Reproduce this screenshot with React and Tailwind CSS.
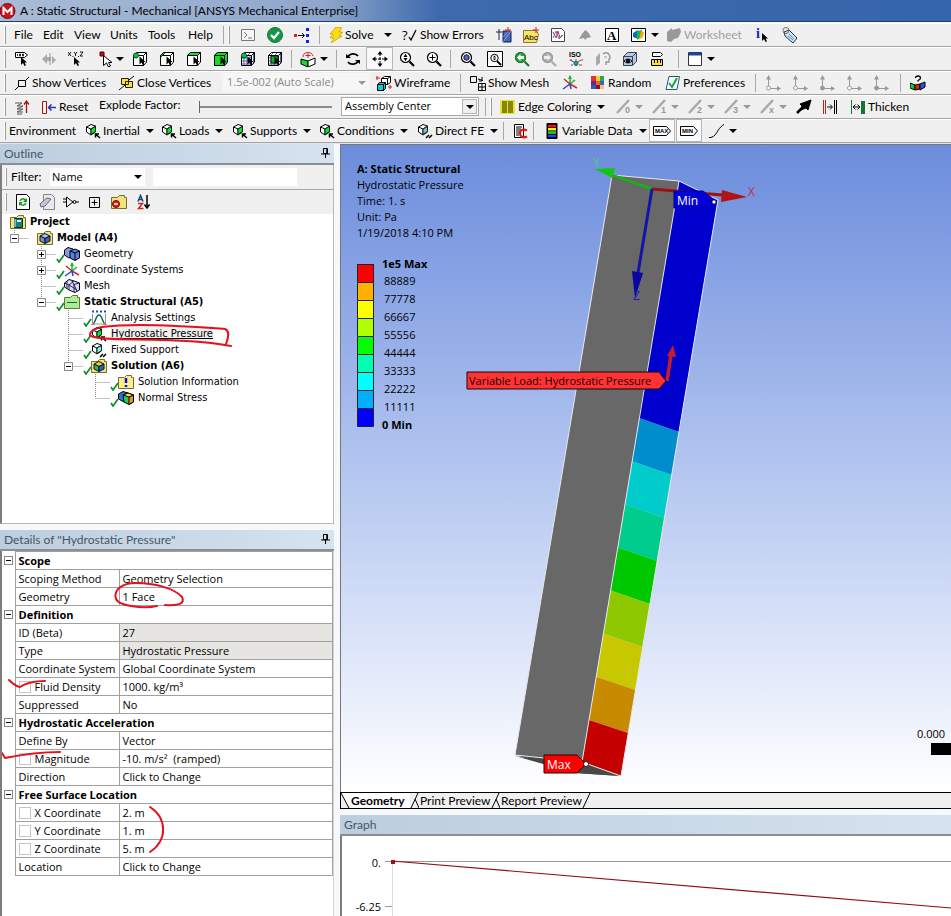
import { Fragment } from 'react';

const LEGEND = [
  ['1e5 Max', '#ff0000'],
  ['88889', '#ffb000'],
  ['77778', '#ffff00'],
  ['66667', '#b0ff00'],
  ['55556', '#00ff00'],
  ['44444', '#00ffb0'],
  ['33333', '#00ffff'],
  ['22222', '#00b0ff'],
  ['11111', '#0000ff'],
  ['0 Min', null],
];

const BAND_COLORS = ['#008dcc', '#00cccc', '#00cc8d', '#00c800', '#8dc800', '#c8c800', '#c88a00', '#c40000'];

// Small building blocks

function Icon({ w = 16, h = 16, className = '', children }) {
  return (
    <svg width={w} height={h} viewBox={`0 0 ${w} ${h}`} className={`flex-none ${className}`} fill="none" stroke="#000" aria-hidden="true">
      {children}
    </svg>
  );
}

function Caret({ color = '#000', className = '' }) {
  return (
    <svg width="8" height="4" viewBox="0 0 8 4" className={`flex-none ${className}`} aria-hidden="true">
      <path d="M0 0h8L4 4z" fill={color} />
    </svg>
  );
}

function Toolbar({ children }) {
  return (
    <div className="flex h-6 items-center overflow-hidden border-b border-[#a5a5a5] bg-[#f0f0f0] pl-1 shadow-[inset_0_1px_0_#fff]">
      {children}
    </div>
  );
}

function Grip({ className = '' }) {
  return <span className={`h-[18px] w-[2px] flex-none border-r border-[#9a9a9a] bg-white ${className}`} />;
}

function Sep({ className = '' }) {
  return <span className={`h-[18px] w-px flex-none bg-[#a8a8a8] ${className}`} />;
}

function Tool({ label, className = '', children }) {
  return (
    <button type="button" aria-label={label} className={`flex h-[23px] flex-none items-center whitespace-nowrap text-left ${className}`}>
      {children}
    </button>
  );
}

function IconTool({ label, children }) {
  return (
    <Tool label={label} className="w-[27px] justify-center">
      {children}
    </Tool>
  );
}

// Shared drawings

const Cursor = ({ x = 7, y = 6, fill = '#000', stroke = 'none' }) => (
  <path transform={`translate(${x} ${y})`} d="M0 0v8l2-2 1.500 3 1.500-.7L3.600 5.600H6z" fill={fill} stroke={stroke} strokeWidth=".8" />
);

function CubeSelect({ kind }) {
  const mesh = kind === 'node' || kind === 'element';
  return (
    <Icon>
      <path d="M1 4l3-3h11v10l-3 4H1z" fill="#fff" stroke="none" />
      {kind === 'face' && <path d="M1 4l3-3h11l-3 3z" fill="#0e2" stroke="none" />}
      {kind === 'body' && <path d="M1 4l3-3h11v10l-3 4H1z" fill="#1d2" stroke="none" />}
      {mesh && <path d="M4 4v11M7 4v11M10 4v11M1 7h11M1 10h11M1 13h11M4 4l3-3M8 4l3-3M13.500 3v10" stroke="#3a3a99" strokeWidth=".8" />}
      {kind === 'element' && <path d="M4 5h7v7H4z" fill="#1a3" stroke="#020" />}
      <path d="M1.500 4.500h10v10h-10zM1.500 4.500l3-3h10v9.500l-3 3.500M11.500 4.500l3-3" />
      {kind === 'edge' && <path d="M1.500 4.500l3-3 1 1-3 3z" fill="#1d2" />}
      {(kind === 'vertex' || kind === 'node') && <circle cx="4" cy="4.500" r="2.500" fill="#1b5" stroke="#052" />}
      <Cursor x={7.5} y={5.5} />
    </Icon>
  );
}

function LoadIcon({ face = '#1d4', lines = false }) {
  return (
    <Icon>
      <path d="M1.500 4L6 1.500 10.500 3v6L6 12 1.500 9z" fill="#fff" />
      <path d="M1.500 4L6 6l4.500-3M6 6v6" />
      <path d="M6 6l4.500-2.500v5L6 11.500z" fill={face} stroke="#030" />
      {lines ? <path d="M9 15l3-3M12 15l3-3" strokeWidth="1.500" /> : <path d="M15 15l-4-3.500M10.500 14.500v-3.500h3.500" strokeWidth="1.500" />}
    </Icon>
  );
}

function Magnifier({ color = '#000', children }) {
  return (
    <Icon>
      <circle cx="6.500" cy="6.500" r="5" fill="#fff" stroke={color} strokeWidth="1.200" />
      <path d="M10.500 10.500L15 15" stroke={color} strokeWidth="2.200" />
      {children}
    </Icon>
  );
}

function TriadIcon() {
  return (
    <Icon>
      <path d="M8 9V1M8 9l5-4" stroke="#1b3" strokeWidth="1.500" />
      <path d="M8 9l7 4M2 4l6 5" stroke="#d22" strokeWidth="1.500" />
      <path d="M8 9l-7 5M8 9l1 5" stroke="#24d" strokeWidth="1.500" />
      <path d="M8 0L6 4h4z" fill="#1b3" stroke="none" />
    </Icon>
  );
}

function GrayAxes({ hollow }) {
  return (
    <Icon className="mr-[11px]">
      <path d="M3.500 2v11.500H14" stroke="#999" />
      <path d="M1 4.500L3.500 0 6 4.500zM12 11l4 2.500-4 2.500z" fill="#999" stroke="none" />
      <circle cx="3.500" cy="13" r="2" fill={hollow ? '#fff' : '#999'} stroke="#999" />
    </Icon>
  );
}

function GrayEdge({ label }) {
  return (
    <Tool label={`Edge style ${label}`} className="w-9 gap-[3px]">
      <Icon>
        <path d="M1 14L13 1" stroke="#aaa" strokeWidth="2.500" />
        <text x="9" y="14" fontSize="9" fontWeight="bold" fill="#999" stroke="none" fontFamily="Liberation Sans, sans-serif">{label}</text>
      </Icon>
      <Caret color="#999" />
    </Tool>
  );
}

function Folder({ fill = '#f5e27a', children }) {
  return (
    <Icon>
      <path d="M.5 3.500h6l2-2h5v2h2v11H.5z" fill={fill} stroke="#776c30" />
      {children}
    </Icon>
  );
}

function Cube({ top = '#a9c4f5', left = '#6f93e0', right = '#3d62b8' }) {
  return (
    <>
      <path d="M3 6l5-2.500L13 6 8 8.500z" fill={top} stroke="#112" />
      <path d="M3 6v5l5 2.500v-5z" fill={left} stroke="#112" />
      <path d="M13 6v5l-5 2.500v-5z" fill={right} stroke="#112" />
    </>
  );
}

function Pin() {
  return (
    <button type="button" aria-label="Auto hide">
      <Icon w={9} h={11} className="mr-1">
        <path d="M2.500.5h4v5h-4zM0 6h9M4.500 6v4" />
        <path d="M6 1v5" strokeWidth="1.500" />
      </Icon>
    </button>
  );
}

function PanelHeader({ title, children }) {
  return (
    <div className="flex h-[21px] flex-none items-center justify-between border-b-2 border-[#8a8f96] bg-linear-to-r from-[#bccddd] to-[#d6e3f0] pl-1 font-['Lato','Open_Sans',sans-serif] text-[12px] text-[#44566a]">
      <h2 className="whitespace-nowrap">{title}</h2>
      {children}
    </div>
  );
}

// Toolbars

function MenuBar() {
  return (
    <Toolbar>
      <Grip className="mr-2" />
      <Tool className="w-[29px]">File</Tool>
      <Tool className="w-[31px]">Edit</Tool>
      <Tool className="w-9">View</Tool>
      <Tool className="w-[38px]">Units</Tool>
      <Tool className="w-10">Tools</Tool>
      <Tool className="w-[35px]">Help</Tool>
      <Sep />
      <Grip className="mr-1 ml-1" />
      <IconTool label="Command prompt">
        <Icon>
          <path d="M1.500 2.500h13v11h-13z" fill="#f6f6f6" stroke="#777" />
          <path d="M4 5l3 3-3 3M8 11h4" stroke="#777" />
        </Icon>
      </IconTool>
      <IconTool label="Check">
        <Icon>
          <circle cx="8" cy="8" r="7.500" fill="#169447" stroke="#0d7a38" />
          <path d="M4 8l3 3 5-6" stroke="#fff" strokeWidth="2.200" />
        </Icon>
      </IconTool>
      <IconTool label="Distribute">
        <Icon>
          <path d="M0 7h3v3H0z" fill="#d22" stroke="none" />
          <path d="M4 8.500h6M8 6l2.500 2.500L8 11" />
          <path d="M12 1h3v3h-3zM12 7h3v3h-3zM12 13h3v3h-3z" fill="#12e" stroke="none" />
        </Icon>
      </IconTool>
      <Sep className="mr-2 ml-1" />
      <Tool className="w-[74px] gap-[1px]">
        <Icon>
          <path d="M8 0l6 1-3 4h4l-4 4h3L3 16l3-5H2l3-4H2z" fill="#fd1" stroke="#b90" strokeWidth=".7" />
        </Icon>
        Solve
        <Caret className="ml-[10px]" />
      </Tool>
      <Tool className="w-[88px] gap-[2px]">
        <Icon>
          <text x="0" y="13" fontSize="13" fill="#000" stroke="none" fontFamily="Open Sans, sans-serif">?</text>
          <path d="M7 10l2 3 5-10" strokeWidth="1.300" />
        </Icon>
        Show Errors
      </Tool>
      <IconTool label="Section plane">
        <Icon>
          <path d="M7 4h8v11H7z" fill="#3f68c4" stroke="#123" />
          <path d="M7 15l8-11M7 10l6-6" stroke="#9db7ee" strokeWidth=".7" />
          <path d="M0 5h6M3 2v11" stroke="#224" />
          <path d="M12 0v6M9 3h6" stroke="#d22" />
        </Icon>
      </IconTool>
      <IconTool label="Annotation">
        <Icon>
          <path d="M.5 3.500h13l2 4-2 8H.5z" fill="#f8e36b" stroke="#8a7b20" />
          <text x="1" y="13" fontSize="8" fill="#000" stroke="none" fontFamily="Liberation Sans, sans-serif">Abc</text>
          <path d="M13 0v6M10 3h6" stroke="#d22" />
        </Icon>
      </IconTool>
      <IconTool label="New chart">
        <Icon>
          <path d="M1.500 1.500h10l3 3v10h-13z" fill="#fff" stroke="#444" />
          <path d="M3 5l3 6 2-7 2 7 3-3" stroke="#b12b6e" />
          <path d="M3 11l3-7 3 8 3-4" stroke="#67a" />
        </Icon>
      </IconTool>
      <IconTool label="Comment">
        <Icon>
          <path d="M8 3l3 2 3 5-4 1-2 2-1-2-5 1 3-5z" fill="#999" stroke="none" />
        </Icon>
      </IconTool>
      <IconTool label="Figure text">
        <Icon>
          <path d="M1.500 1.500h13v13h-13z" fill="#fff" />
          <text x="3" y="13" fontSize="13" fontWeight="bold" fill="#000" stroke="none" fontFamily="Liberation Serif, serif">A</text>
        </Icon>
      </IconTool>
      <Tool label="Image" className="ml-[6px] w-[35px] gap-1">
        <Icon>
          <path d="M.5 1.500h14v13H.5z" fill="#fff" />
          <path d="M2 6l5-3v9l-5-2z" fill="#16c" stroke="none" />
          <path d="M6 4l5-1v7l-5 3z" fill="#1b4" stroke="none" />
          <path d="M10 4l3 1-1 5-4 3z" fill="#fa1" stroke="none" />
        </Icon>
        <Caret />
      </Tool>
      <button type="button" disabled className="flex w-[83px] flex-none items-center gap-[2px] whitespace-nowrap text-[#a0a0a0]">
        <Icon>
          <path d="M1 5l5-4v2l8-2 1 4-3 6-4 1-3 3-4-1z" fill="#999" stroke="none" />
        </Icon>
        Worksheet
      </button>
      <IconTool label="Selection information">
        <Icon>
          <text x="1" y="11" fontSize="14" fontWeight="bold" fill="#12c" stroke="none" fontFamily="Liberation Serif, serif">i</text>
          <Cursor x={7} y={6} />
        </Icon>
      </IconTool>
      <IconTool label="Tags">
        <Icon>
          <path d="M2 5l5-2 8 8-4 5-8-7z" fill="#cfe6f7" stroke="#234" />
          <path d="M7 7l5 5M6 9l5 4" stroke="#37a" strokeWidth=".8" />
          <circle cx="4" cy="3.500" r="3" stroke="#555" strokeWidth=".8" />
        </Icon>
      </IconTool>
    </Toolbar>
  );
}

function GraphicsBar() {
  return (
    <Toolbar>
      <Grip className="mr-[2px]" />
      <IconTool label="Label">
        <Icon>
          <path d="M1.500 1.500h9l3 2.500-3 2.500h-9z" fill="#fff" />
          <path d="M3.500 3v2M5.500 3h1v2h-1zM8.500 3h1v2h-1z" strokeWidth=".8" />
          <Cursor x={7} y={6} />
        </Icon>
      </IconTool>
      <IconTool label="Direction">
        <Icon>
          <path d="M1 8l5-5v3h4v4H6v3zM11 5l4 4-4 4z" fill="#aaa" stroke="none" />
          <path d="M9 2v12" stroke="#999" />
        </Icon>
      </IconTool>
      <IconTool label="Coordinates">
        <Icon>
          <path d="M0 1l3 4M3 1L0 5M6 1l1.500 2L9 1M7.500 3v2M12 1h3l-3 4h3M5 5v1M10.500 5v1" strokeWidth=".9" />
          <Cursor x={6} y={6} />
        </Icon>
      </IconTool>
      <Tool label="Select mode" className="ml-[10px] w-[27px] gap-px">
        <Icon>
          <path d="M1 1h4v4H1z" fill="#b01020" stroke="#600" />
          <path d="M4.500 4.500v10l3-2.500 2 4 2-1-2-3.500h3.500z" fill="#fff" />
        </Icon>
        <Caret />
      </Tool>
      {['vertex', 'edge', 'face', 'body', 'node', 'element'].map((kind) => (
        <IconTool key={kind} label={`Select ${kind}`}>
          <CubeSelect kind={kind} />
        </IconTool>
      ))}
      <Sep className="mr-2 ml-[3px]" />
      <Tool label="Extend selection" className="w-9 gap-1">
        <Icon>
          <path d="M1 8l7 2v6l-7-3z" fill="#1d3" />
          <path d="M8 10l7-3v6l-7 3z" fill="#fff" />
          <path d="M3 6a5 4 0 0 1 10-1M8 2v5M5.500 4.500h5" stroke="#c22" />
        </Icon>
        <Caret />
      </Tool>
      <Sep className="mr-[2px]" />
      <IconTool label="Rotate">
        <Icon>
          <path d="M3 6a5.500 4.500 0 0 1 10-1M13 10a5.500 4.500 0 0 1-10 1" strokeWidth="1.800" />
          <path d="M1 3v4h5zM15 13V9h-5z" fill="#000" stroke="none" />
        </Icon>
      </IconTool>
      <Tool label="Pan" className="w-[27px] justify-center border border-[#b8b8b8] bg-[#f9f9f9]">
        <Icon>
          <path d="M8 2v12M2 8h12" strokeDasharray="3 1" />
          <path d="M8 0l2.500 3.500h-5zM8 16l2.500-3.500h-5zM0 8l3.500-2.500v5zM16 8l-3.500-2.500v5z" fill="#000" stroke="none" />
        </Icon>
      </Tool>
      <IconTool label="Zoom">
        <Magnifier>
          <path d="M6.500 2.800L8.500 6h-4zM6.500 10.200L8.500 7h-4z" fill="#000" stroke="none" />
        </Magnifier>
      </IconTool>
      <IconTool label="Box zoom">
        <Magnifier>
          <path d="M3.500 6.500h6M6.500 3.500v6" />
        </Magnifier>
      </IconTool>
      <Sep className="mr-[3px] ml-[3px]" />
      <IconTool label="Zoom to fit">
        <Magnifier>
          <path d="M4 5l2.500-1.500L9 5v3L6.500 9.500 4 8z" fill="#56b" stroke="#114" />
        </Magnifier>
      </IconTool>
      <IconTool label="Magnifier window">
        <Icon>
          <path d="M.5.5h15v15H.5z" fill="#fff" />
          <circle cx="7.500" cy="7" r="3.700" />
          <path d="M10 10l4 4" strokeWidth="2" />
          <path d="M7.500 4.500l1.500 2H6zM7.500 9.500L9 7.500H6z" fill="#000" stroke="none" />
        </Icon>
      </IconTool>
      <IconTool label="Previous view">
        <Magnifier color="#187a28">
          <circle cx="6.500" cy="6.500" r="5" fill="#27a33a" stroke="#187a28" />
          <path d="M3 6.500L6.500 3v2H10v3H6.500v2z" fill="#fff" stroke="none" />
        </Magnifier>
      </IconTool>
      <IconTool label="Next view">
        <Magnifier color="#aaa">
          <circle cx="6.500" cy="6.500" r="5" fill="#aaa" stroke="#999" />
          <path d="M10 6.500L6.500 3v2H3v3h3.500v2z" fill="#eee" stroke="none" />
        </Magnifier>
      </IconTool>
      <IconTool label="Isometric view">
        <Icon>
          <text x="1" y="6" fontSize="7" fontWeight="bold" fill="#000" stroke="none" fontFamily="Liberation Sans, sans-serif">ISO</text>
          <path d="M8 12l5-3M8 12V8" stroke="#d22" />
          <path d="M8 12L2 9" stroke="#24d" />
          <circle cx="8" cy="12.500" r="2" fill="#1aa" stroke="#066" />
          <path d="M2 9h2M13 9h2M3 14h2M11 14h3" stroke="#d22" />
        </Icon>
      </IconTool>
      <IconTool label="Look at">
        <Icon>
          <path d="M1 6l4-4v10l-4 3z" fill="#aaa" stroke="none" />
          <path d="M8 3c4-3 7 0 7 4l-1 1v3h-3v3" stroke="#999" strokeWidth="1.500" />
          <path d="M9 6h3" stroke="#999" />
        </Icon>
      </IconTool>
      <IconTool label="Manage views">
        <Icon>
          <path d="M1.500 5.500l4-4h9v9l-4 4h-9z" fill="#b8c9e6" stroke="#345" />
          <path d="M1.500 5.500h9v9M10.500 5.500l4-4" stroke="#345" />
          <path d="M2 10q4-4 8 0-4 4-8 0z" fill="#fff" />
          <circle cx="6" cy="10" r="1.500" fill="#124" />
        </Icon>
      </IconTool>
      <IconTool label="Ruler">
        <Icon>
          <path d="M3.500 1.500h8l2 2-2 2h-8z" fill="#fff" />
          <path d="M2.500 8.500h11v6h-11z" fill="#fd3" />
          <path d="M5.500 9v3M8.500 9v3M11.500 9v3" />
        </Icon>
      </IconTool>
      <Sep className="mr-2 ml-2" />
      <Tool label="Viewports" className="w-9 gap-1">
        <Icon>
          <path d="M1.500 1.500h13v13h-13z" fill="#fff" stroke="#333" />
          <path d="M2 3h12" stroke="#114a9e" strokeWidth="3" />
        </Icon>
        <Caret />
      </Tool>
    </Toolbar>
  );
}

function DisplayBar() {
  return (
    <Toolbar>
      <Grip className="mr-2" />
      <Tool className="w-[105px] gap-[2px]">
        <Icon>
          <path d="M4.500 5.500h7v6h-7zM1 15l3.500-3.500M11.500 5.500L15 2" />
        </Icon>
        Show Vertices
      </Tool>
      <Tool className="w-[103px] gap-[2px]">
        <Icon>
          <path d="M2.500 3.500h7v6h-7zM6.500 6.500h7v6h-7z" fill="#fd3" stroke="#221" />
          <path d="M0 15l6-5M10 5l5-4" />
        </Icon>
        Close Vertices
      </Tool>
      <div className="relative flex h-[19px] w-[148px] flex-none items-center">
        <select aria-label="Vertex tolerance" disabled className="h-full w-full appearance-none bg-[#f6f6f6] pl-[5px] font-['Open_Sans',sans-serif] text-[11px] text-[#8a8a8a] opacity-100">
          <option>1.5e-002 (Auto Scale)</option>
        </select>
        <Caret color="#999" className="absolute right-1" />
      </div>
      <Tool className="ml-[6px] w-[84px] gap-[2px]">
        <Icon>
          <path d="M5.500 3.500l3-2h6v6l-3 2h-6zM5.500 3.500h6v6M11.500 3.500l3-2" fill="#fff" />
          <path d="M1.500 9.500l2-2h6v6l-2 2h-6z" fill="#1cc" />
          <path d="M1.500 9.500h6v6M7.500 9.500l2-2" />
          <path d="M1 1v4M0 3h4M12 12h4M14 10v4" stroke="#c22" />
        </Icon>
        Wireframe
      </Tool>
      <Sep className="mr-[9px]" />
      <Tool className="w-[92px] gap-[2px]">
        <Icon>
          <path d="M.5 1.500h6v6h-6z" />
          <path d="M8 4l5 1.500M12 2v4H9" />
          <path d="M8.500 8.500h7v7h-7zM12 8.500v7M8.500 12h7" />
        </Icon>
        Show Mesh
      </Tool>
      <Tool label="Coordinate systems" className="w-7">
        <TriadIcon />
      </Tool>
      <Tool className="w-[75px] gap-[2px]">
        <Icon>
          <path d="M1 1h5v5H1z" fill="#d33" stroke="none" />
          <path d="M6 1h4v5H6z" fill="#fc2" stroke="none" />
          <path d="M10 1h4v5h-4z" fill="#2a5" stroke="none" />
          <path d="M1 6h5v4H1z" fill="#728" stroke="none" />
          <path d="M6 6h4v4H6z" fill="#e63" stroke="none" />
          <path d="M10 6h4v4h-4z" fill="#36c" stroke="none" />
          <path d="M1 10h5v4H1z" fill="#26a" stroke="none" />
          <path d="M6 10h4v4H6z" fill="#813" stroke="none" />
          <path d="M10 10h4v4h-4z" fill="#fb7" stroke="none" />
        </Icon>
        Random
      </Tool>
      <Tool className="w-[90px] gap-[2px]">
        <Icon>
          <path d="M4 1.500h10.500L12 14.500H1z" fill="#fff" stroke="#258" />
          <path d="M4 8l3 4 5-9" stroke="#1a3" strokeWidth="2" />
        </Icon>
        Preferences
      </Tool>
      <Sep className="mr-[9px]" />
      {[true, true, false, true, false].map((hollow, i) => (
        <Tool key={i} label="Axis option">
          <GrayAxes hollow={hollow} />
        </Tool>
      ))}
      <Sep className="mr-[9px]" />
      <Tool label="Help view">
        <Icon>
          <path d="M0 8l5 2v5l-5-2z" fill="#1c3" />
          <path d="M5 10l5-1v5l-5 1z" fill="#d22" />
          <path d="M10 9l5-2v5l-5 3z" fill="#25d" />
          <path d="M5.500 3q0-2 2.500-2t2.500 2q0 1.500-2.500 2.500v1" strokeWidth="1.300" />
        </Icon>
      </Tool>
    </Toolbar>
  );
}

function ExplodeBar() {
  return (
    <Toolbar>
      <Grip className="mr-2" />
      <Tool label="Explode" className="w-[27px]">
        <Icon>
          <path d="M1 4h7L3 7h6L3 10h6l-6 3h6M3 15h5" stroke="#555" />
          <path d="M12.500 14V3M10 5.500L12.500 2 15 5.500" stroke="#a11" strokeWidth="1.300" />
        </Icon>
      </Tool>
      <Tool className="w-[58px] gap-[2px]">
        <Icon>
          <path d="M1.500 2.500h4v12h-4z" stroke="#a11" />
          <path d="M15 8.500H8M10.500 5.500l-3 3 3 3" stroke="#23b" strokeWidth="1.500" />
        </Icon>
        Reset
      </Tool>
      <label htmlFor="explode" className="mb-1 w-[97px] flex-none whitespace-nowrap">Explode Factor:</label>
      <input
        id="explode"
        type="range"
        defaultValue="0"
        className="h-5 w-[136px] flex-none appearance-none bg-transparent bg-[linear-gradient(#8d8d8d,#8d8d8d)] bg-[length:100%_2px] bg-center bg-no-repeat [&::-webkit-slider-thumb]:h-3 [&::-webkit-slider-thumb]:w-1 [&::-webkit-slider-thumb]:appearance-none [&::-webkit-slider-thumb]:border-r [&::-webkit-slider-thumb]:border-[#666] [&::-webkit-slider-thumb]:bg-[#f0f0f0]"
      />
      <div className="relative ml-[9px] flex h-[19px] w-[138px] flex-none items-center">
        <select aria-label="Explode origin" className="h-full w-full appearance-none border border-[#a9a9a9] bg-white pl-[3px] font-['Open_Sans',sans-serif] text-[11px]">
          <option>Assembly Center</option>
        </select>
        <span className="pointer-events-none absolute right-[2px] flex h-[15px] w-[15px] items-center justify-center border border-[#b5b5b5] bg-[#efefef]">
          <Caret />
        </span>
      </div>
      <Sep className="ml-[6px]" />
      <Grip className="mr-2 ml-1" />
      <Tool className="w-[116px] gap-[2px]">
        <Icon>
          <path d="M0 1h15v14H0z" fill="#e6e23a" stroke="none" />
          <path d="M2 2h5v12H2zM8 2h5v12H8z" fill="#8a8600" stroke="none" />
        </Icon>
        Edge Coloring
        <Caret className="ml-1" />
      </Tool>
      {['0', '1', '2', '3', 'x'].map((n) => (
        <GrayEdge key={n} label={n} />
      ))}
      <Tool label="Edge direction" className="w-[26px]">
        <Icon>
          <path d="M1 14L8 7" strokeWidth="2.500" />
          <path d="M15 1l-3 10-2-2-5 2 1-4-2-2z" fill="#000" />
        </Icon>
      </Tool>
      <Tool label="Edge connection" className="w-[28px]">
        <Icon>
          <path d="M1.500 1v14M3.500 1v14" stroke="#b22" />
          <path d="M12.500 1v14M14.500 1v14M5 8h5M8 5.500L10.500 8 8 10.500" />
        </Icon>
      </Tool>
      <Tool className="gap-[2px]">
        <Icon>
          <path d="M1.500 1v14" stroke="#173" />
          <path d="M3 8h7M5.500 5.500L3 8l2.500 2.500M7.500 5.500L10 8l-2.500 2.500" />
          <path d="M11 2h4v13h-4z" fill="#173" stroke="none" />
        </Icon>
        Thicken
      </Tool>
    </Toolbar>
  );
}

function EnvironmentBar() {
  return (
    <Toolbar>
      <Grip className="mr-[3px]" />
      <span className="w-[76px] flex-none">Environment</span>
      <Tool className="w-[76px] gap-[2px]"><LoadIcon />Inertial<Caret className="ml-1" /></Tool>
      <Tool className="w-[71px] gap-[2px]"><LoadIcon />Loads<Caret className="ml-1" /></Tool>
      <Tool className="w-[87px] gap-[2px]"><LoadIcon />Supports<Caret className="ml-1" /></Tool>
      <Tool className="w-[98px] gap-[2px]"><LoadIcon />Conditions<Caret className="ml-1" /></Tool>
      <Tool className="w-[86px] gap-[2px]"><LoadIcon face="#89b4e8" lines />Direct FE<Caret className="ml-1" /></Tool>
      <Sep className="mr-[2px]" />
      <IconTool label="Commands">
        <Icon>
          <path d="M2.500 1.500h9v13h-9z" fill="#fff" />
          <path d="M4 4h6M4 6h5M4 8h4M4 10h3M4 12h3" />
          <path d="M15 7.500c-5-2-7 0-7 3s3 5 7 3" stroke="#e11" strokeWidth="2.200" />
        </Icon>
      </IconTool>
      <Sep className="mr-[10px]" />
      <Tool className="w-[105px] gap-[2px]">
        <Icon>
          <path d="M3 .5h10v15H3z" fill="#000" />
          <path d="M4 3h8" stroke="#e11" strokeWidth="2.500" />
          <path d="M4 6.200h8" stroke="#fe1" strokeWidth="2.500" />
          <path d="M4 9.500h8" stroke="#1d3" strokeWidth="2.500" />
          <path d="M4 13h8" stroke="#14e" strokeWidth="2.500" />
        </Icon>
        Variable Data
        <Caret className="ml-1" />
      </Tool>
      {['MAX', 'MIN'].map((t) => (
        <Tool key={t} label={t} className="mr-px w-[26px] justify-center border border-[#b5b5b5] bg-[#fafafa]">
          <Icon w={20}>
            <path d="M1.500 3.500h13l4 4.500-4 4.500h-13z" fill="#fff" />
            <text x="3" y="10" fontSize="6" fontWeight="bold" fill="#000" stroke="none" fontFamily="Liberation Sans, sans-serif">{t}</text>
          </Icon>
        </Tool>
      ))}
      <Tool label="Edge options" className="ml-[6px] gap-1">
        <Icon>
          <path d="M0 14.500h2c4-1 5-4 7-7s4-5 6-6" />
        </Icon>
        <Caret />
      </Tool>
    </Toolbar>
  );
}

// Outline tree

const TREE = [
  { depth: 0, text: 'Project', icon: 'project', bold: true },
  { depth: 1, text: 'Model (A4)', icon: 'model', bold: true, box: '-', last: true },
  { depth: 2, text: 'Geometry', icon: 'geometry', box: '+', check: true },
  { depth: 2, text: 'Coordinate Systems', icon: 'csys', box: '+', check: true },
  { depth: 2, text: 'Mesh', icon: 'mesh', check: true },
  { depth: 2, text: 'Static Structural (A5)', icon: 'static', bold: true, box: '-', check: true, last: true },
  { depth: 3, text: 'Analysis Settings', icon: 'analysis', check: true },
  { depth: 3, text: 'Hydrostatic Pressure', icon: 'load', check: true, selected: true },
  { depth: 3, text: 'Fixed Support', icon: 'support', check: true },
  { depth: 3, text: 'Solution (A6)', icon: 'solution', bold: true, box: '-', check: true, last: true },
  { depth: 4, text: 'Solution Information', icon: 'info', check: true },
  { depth: 4, text: 'Normal Stress', icon: 'stress', check: true, last: true },
];

const TREE_ICONS = {
  project: (
    <Folder>
      <path d="M4.500 4.500h8v9h-8z" fill="#17807a" stroke="#033" />
      <path d="M7 6h4v2H7z" fill="#dff" stroke="none" />
      <path d="M5 5v8" stroke="#cff" />
    </Folder>
  ),
  model: <Folder><Cube /></Folder>,
  geometry: (
    <Icon>
      <path d="M.5 4L4 1.500 9 3v7l-4 2-4.500-3z" fill="#7f9de6" />
      <path d="M6 5l5-2 4.500 2v7L11 14.500 6 12z" fill="#5a7fdc" />
      <path d="M6 5l5 2 4.500-2M11 7v7.500" />
    </Icon>
  ),
  csys: <TriadIcon />,
  mesh: (
    <Icon>
      <path d="M.5 5L5 1.500 10 3l5.500 2v7L11 14.500 5 12 .5 9z" fill="#dde" />
      <path d="M.5 5L5 7l5-4M5 7v5M10 6.500l5.500-1.500M10 6.500v7.500M3 3.500v7M8 3l5 10M5 7l8 5" stroke="#226" />
    </Icon>
  ),
  static: (
    <Folder fill="#a6f09a">
      <path d="M3 8.500h10" stroke="#353" />
    </Folder>
  ),
  analysis: (
    <Icon>
      <path d="M1 1.500h14" stroke="#24c" strokeDasharray="2 2" strokeWidth="2" />
      <path d="M1.500 14c3 0 3-9 6.500-9s3.500 9 6.500 9" stroke="#164" strokeWidth="1.500" />
      <path d="M1.500 4v10h13V4" stroke="#89a" />
      <path d="M0 15l2-3 2 3zM12 15l2-3 2 3z" fill="#d66" stroke="none" />
    </Icon>
  ),
  load: <LoadIcon />,
  support: <LoadIcon face="#8ce8ff" lines />,
  solution: <Folder><Cube top="#fc3" left="#2b6" right="#26c" /></Folder>,
  info: (
    <Folder fill="#fbee90">
      <path d="M8 4v5M8 11v2" stroke="#11c" strokeWidth="2.500" />
    </Folder>
  ),
  stress: (
    <Icon>
      <path d="M.5 4L5 1.500 10 3v8l-4 1-5.500-3z" fill="#27d" />
      <path d="M5 5l5-2 5.500 2v7L11 14.500 6 12z" fill="#2c5" />
      <path d="M11 7l4.500-2v7L11 14.500z" fill="#f82" />
      <path d="M5 5l6 2 4.500-2-5.500-2z" fill="#fd3" />
    </Icon>
  ),
};

function TreeRow({ item }) {
  return (
    <li className="flex h-4 items-center pl-2">
      {Array.from({ length: Math.max(0, item.depth - 1) }, (_, i) => (
        <span key={i} className="w-[27px] flex-none" />
      ))}
      {item.depth > 0 && (
        <svg width="27" height="16" className="flex-none" fill="none" aria-hidden="true">
          <path d={`M4.500 0v${item.last ? 8 : 16}M4.500 8.500H19`} stroke="#888" strokeDasharray="1 1" />
          {item.box && <path d="M.5 4.500h8v8h-8z" fill="#fff" stroke="#888" />}
          {item.box && <path d={item.box === '+' ? 'M2 8.500h5M4.500 6v5' : 'M2 8.500h5'} stroke="#000" />}
        </svg>
      )}
      <span className="relative h-4 flex-none">
        {TREE_ICONS[item.icon]}
        {item.check && (
          <svg width="9" height="9" className="absolute -bottom-px -left-2" fill="none" aria-hidden="true">
            <path d="M1 5l2 3 5-7" stroke="#15922c" strokeWidth="1.800" />
          </svg>
        )}
      </span>
      <button type="button" className={`ml-1 whitespace-nowrap ${item.bold ? 'font-bold' : ''} ${item.selected ? 'bg-[#efefef] underline' : ''}`}>
        {item.text}
      </button>
    </li>
  );
}

function Outline() {
  return (
    <section className="flex h-[380px] flex-none flex-col">
      <PanelHeader title="Outline"><Pin /></PanelHeader>
      <div className="flex flex-1 flex-col border-r border-b border-l-2 border-[#b8b8b8] border-l-[#7d7d7d] bg-white">
        <div className="flex h-[25px] flex-none items-center border-b border-[#a5a5a5] bg-[#f0f0f0] pl-[3px]">
          <Grip className="mr-1" />
          <label htmlFor="filter" className="w-[39px] font-['Lato','Open_Sans',sans-serif] text-[12px]">Filter:</label>
          <div className="relative flex h-[18px] w-[95px] items-center">
            <select id="filter" className="h-full w-full appearance-none bg-white pl-[2px]">
              <option>Name</option>
            </select>
            <Caret className="pointer-events-none absolute right-[3px]" />
          </div>
          <input aria-label="Filter text" className="ml-2 h-[18px] w-36 bg-white" />
        </div>
        <div className="flex h-6 flex-none items-center gap-2 bg-[#f0f0f0] pl-[3px]">
          <Grip />
          <button type="button" aria-label="Refresh">
            <Icon>
              <path d="M1.500.5h10l3 3v12h-13z" fill="#fff" />
              <path d="M5 7c1-3 5-3 6 0M11 9c-1 3-5 3-6 0" stroke="#192" strokeWidth="1.500" />
              <path d="M12 4v4H8zM4 12V8h4z" fill="#192" stroke="none" />
            </Icon>
          </button>
          <button type="button" aria-label="Clear">
            <Icon>
              <path d="M4.500.5h8l3 3v12h-11z" fill="#e8e8ef" stroke="#888" />
              <path d="M1 10l7-6 4 1-6 7-4 1z" fill="#c5c8dc" stroke="#667" />
            </Icon>
          </button>
          <button type="button" aria-label="Filter gate">
            <Icon>
              <path d="M0 8h3M3.500 3v10L10 8zM13 8h3M0 5h3" />
              <circle cx="11.500" cy="8" r="1.500" />
            </Icon>
          </button>
          <button type="button" aria-label="Expand all">
            <Icon>
              <path d="M2.500 3.500h10v10h-10zM4.500 8.500h6M7.500 5.500v6" />
            </Icon>
          </button>
          <button type="button" aria-label="Hide">
            <Folder>
              <circle cx="5" cy="10" r="3.500" fill="#d22" stroke="#700" />
              <path d="M3 10h4" stroke="#fff" strokeWidth="1.500" />
            </Folder>
          </button>
          <button type="button" aria-label="Sort" className="ml-[2px]">
            <Icon>
              <path d="M1 7.500l2.500-6 2.500 6M2 5.500h3" stroke="#147" strokeWidth="1.500" />
              <path d="M1 9.500h4.500L1.500 14.500h5" stroke="#c22" strokeWidth="1.500" />
              <path d="M10 1v12M7.500 10.500L10 14l2.500-3.500" strokeWidth="1.500" />
            </Icon>
          </button>
        </div>
        <div className="relative flex-1">
          <ul className="font-['DejaVu_Sans_Condensed','Open_Sans',sans-serif]">
            {TREE.map((item) => (
              <TreeRow key={item.text} item={item} />
            ))}
          </ul>
          {/* pen mark around the selected load */}
          <svg width="150" height="30" className="pointer-events-none absolute top-[108px] left-[86px]" fill="none" stroke="#e3121c" strokeWidth="2" strokeLinecap="round" aria-hidden="true">
            <path d="M14 5C4 7 0 12 3 14c6 4 40 3 75 4 30 1 50 3 65 6M14 5C50 0 110 5 137 7c5 2 3 10 1 15" />
          </svg>
        </div>
      </div>
    </section>
  );
}

// Details grid

const DETAILS = [
  { section: 'Scope' },
  { label: 'Scoping Method', value: 'Geometry Selection' },
  { label: 'Geometry', value: '1 Face' },
  { section: 'Definition' },
  { label: 'ID (Beta)', value: '27', locked: true },
  { label: 'Type', value: 'Hydrostatic Pressure', locked: true },
  { label: 'Coordinate System', value: 'Global Coordinate System' },
  { label: 'Fluid Density', value: '1000. kg/m³', param: true },
  { label: 'Suppressed', value: 'No' },
  { section: 'Hydrostatic Acceleration' },
  { label: 'Define By', value: 'Vector' },
  { label: 'Magnitude', value: '-10. m/s²  (ramped)', param: true },
  { label: 'Direction', value: 'Click to Change' },
  { section: 'Free Surface Location' },
  { label: 'X Coordinate', value: '2. m', param: true },
  { label: 'Y Coordinate', value: '1. m', param: true },
  { label: 'Z Coordinate', value: '5. m', param: true },
  { label: 'Location', value: 'Click to Change' },
];

function Details() {
  return (
    <section className="mt-[6px] flex flex-1 flex-col">
      <PanelHeader title={'Details of "Hydrostatic Pressure"'}><Pin /></PanelHeader>
      <div className="relative flex-1 border-r border-l-2 border-[#d5d5d5] border-l-[#7d7d7d] bg-white">
        <table className="w-full table-fixed border-collapse">
          <colgroup>
            <col className="w-[13px]" />
            <col className="w-[104px]" />
            <col />
          </colgroup>
          <tbody>
            {DETAILS.map((row) => (
              <tr key={row.section || row.label} className="h-[18px] whitespace-pre leading-4">
                <td className="p-0">
                  {row.section && (
                    <button type="button" aria-label={`Collapse ${row.section}`} className="ml-[2px] flex h-[9px] w-[9px] items-center justify-center border border-[#888]">
                      <span className="h-px w-[5px] bg-black" />
                    </button>
                  )}
                </td>
                {row.section ? (
                  <th colSpan={2} className="border border-[#a0a0a0] px-[3px] py-0 text-left font-bold">{row.section}</th>
                ) : (
                  <>
                    <td className="border border-[#a0a0a0] px-[3px] py-0">
                      {row.param ? (
                        <label className="flex items-center gap-1">
                          <input type="checkbox" className="h-3 w-3 flex-none appearance-none border border-[#c4c4c4] bg-white" />
                          {row.label}
                        </label>
                      ) : (
                        row.label
                      )}
                    </td>
                    <td className={`border border-[#a0a0a0] px-[3px] py-0 ${row.locked ? 'bg-[#e6e5e2]' : ''}`}>{row.value}</td>
                  </>
                )}
              </tr>
            ))}
          </tbody>
        </table>
        {/* pen marks */}
        <svg width="330" height="330" className="pointer-events-none absolute top-0 left-0" fill="none" stroke="#e3121c" strokeWidth="2" strokeLinecap="round" aria-hidden="true">
          <path d="M155 55c-14 3-38 0-41-7-3-9 6-16 20-16 18 0 38 5 46 14 3 6-2 9-17 8" />
          <path d="M7 129c3 3 6 6 11 7 6-4 14-6 25-6" />
          <path d="M0 202l3 5c15-3 35-6 55-6" />
          <path d="M148 256c17 11 18 33 0 45" />
        </svg>
      </div>
    </section>
  );
}

// Graphics window

function leftEdge(y) {
  return 679 - ((y - 181) * 97) / 581;
}

function rightEdge(y) {
  return 718 - ((y - 200) * 97) / 576;
}

function Scene() {
  return (
    <svg width="611" height="647" viewBox="341 145 611 647" className="absolute top-0 left-0" fontFamily="Open Sans, Noto Sans, sans-serif" fontSize="12">
      <path d="M612 175L679 181 582 762 515 755z" fill="#686868" />
      <path d="M515 756l105 20-45-3z" fill="#484848" />
      <path d="M515 755l67 7 39 14-46-3z" fill="#484848" />
      <path d="M679 181l39 19-39 232-40-14z" fill="#0000cc" />
      {BAND_COLORS.map((color, i) => {
        const top = 418 + i * 43.14;
        const bottom = i === 7 ? 762 : top + 43.14;
        const rTop = 432 + i * 43;
        const rBottom = i === 7 ? 776 : rTop + 43;
        const points = [
          [leftEdge(top), top],
          [rightEdge(rTop), rTop],
          [rightEdge(rBottom), rBottom],
          [leftEdge(bottom), bottom],
        ];
        return <polygon key={color} points={points.join(' ')} fill={color} />;
      })}
      <path d="M515 755L612 175l67 6 39 19-97 576-39-14 97-581M582 762l-67-7" fill="none" stroke="#e8e8e8" strokeWidth="1" />

      {/* global triad */}
      <path d="M652 189l-40-14" stroke="#12b512" strokeWidth="2.500" />
      <path d="M595 169l20-1-3 10z" fill="#12c512" />
      <path d="M652 189l70 6" stroke="#a01010" strokeWidth="3" />
      <path d="M747 197l-25-7-1 12z" fill="#b01414" />
      <path d="M652 189l-14 84" stroke="#1414a8" strokeWidth="3" />
      <path d="M635 298l-3-27 11 2z" fill="#0808a0" />
      <text x="593" y="167" fill="#4ad07a">Y</text>
      <text x="748" y="196" fill="#d02850">X</text>
      <text x="633" y="300" fill="#1818d8">Z</text>

      {/* probe labels */}
      <path d="M674 191h29l9 7-9 10h-29z" fill="#0000d8" stroke="#0000a0" />
      <text x="677" y="205" fill="#fff">Min</text>
      <circle cx="714" cy="202" r="2" fill="#fff" stroke="#000" strokeWidth=".6" />
      <path d="M544 755h33l9 9-9 9h-33z" fill="#ff0000" stroke="#300" />
      <text x="547" y="769" fill="#fff">Max</text>
      <circle cx="586" cy="764" r="2.500" fill="#fff" stroke="#000" strokeWidth=".8" />

      <path d="M667 381l4-26" stroke="#c41d2b" strokeWidth="3.500" />
      <path d="M673 345l3 12-9-1z" fill="#c41d2b" />
      <path d="M467 372h192l7 9-7 8H467z" fill="#ff3333" stroke="#200" />
      <text x="469" y="385" fill="#200" fontSize="11">Variable Load: Hydrostatic Pressure</text>

      <text x="917" y="738" fontSize="11">0.000</text>
      <path d="M931 743h20v12h-20z" fill="#000" />
    </svg>
  );
}

function Viewport() {
  return (
    <div className="relative flex-1 overflow-hidden border-t border-l border-[#777] bg-linear-to-b from-[#6c8cdc] to-white pl-4 pt-4">
      <Scene />
      <div className="relative leading-4">
        <p className="font-bold">A: Static Structural</p>
        <p>Hydrostatic Pressure</p>
        <p>Time: 1. s</p>
        <p>Unit: Pa</p>
        <p>1/19/2018 4:10 PM</p>
      </div>
      <div className="relative mt-[23px] flex">
        <div className="w-[17px] border-t border-[#222]">
          {LEGEND.filter(([, c]) => c).map(([label, color]) => (
            <svg key={label} width="17" height="18" className="block" aria-hidden="true">
              <path d="M.5-.5h16v18H.5z" fill={color} stroke="#222" />
            </svg>
          ))}
        </div>
        <ul className="-mt-2 ml-2">
          {LEGEND.map(([label], i) => (
            <li key={label} className={`${i === 0 ? 'h-4 leading-4' : 'h-[18px] leading-[18px]'} ${i === 0 || i === 9 ? 'font-bold' : 'pl-[2px]'}`}>{label}</li>
          ))}
        </ul>
      </div>
    </div>
  );
}

function ViewTabs() {
  const tabs = ['Geometry', 'Print Preview', 'Report Preview'];
  return (
    <div className="flex h-[17px] flex-none items-center border-y border-l border-black bg-[#f0f0f0] font-['Lato','Open_Sans',sans-serif] text-[12px]">
      <svg width="9" height="15" className="flex-none" aria-hidden="true">
        <path d="M0 0l8 15h1V0z" fill="#fff" />
        <path d="M0 0l8 15" stroke="#000" />
      </svg>
      {tabs.map((tab, i) => (
        <Fragment key={tab}>
          <button type="button" className={`h-[15px] whitespace-nowrap pl-px text-left leading-[15px] ${i === 0 ? 'w-[60px] bg-white font-bold' : i === 1 ? 'w-[72px]' : 'w-[82px]'}`}>
            {tab}
          </button>
          <svg width="9" height="15" className="flex-none" fill="none" stroke="#000" aria-hidden="true">
            <path d={i === 2 ? 'M1 15L8 0' : 'M1 15L8 0M5 6l4 9'} />
          </svg>
        </Fragment>
      ))}
    </div>
  );
}

function Graph() {
  return (
    <section className="mt-[6px] flex h-[101px] flex-none flex-col">
      <PanelHeader title="Graph" />
      <div className="flex-1 overflow-hidden border-l-2 border-[#7d7d7d] bg-white">
        <svg width="611" height="80" viewBox="342 836 611 80" fontFamily="Open Sans, Noto Sans, sans-serif" fontSize="11">
          <path d="M385 861.500h568M385 906.500h7" stroke="#999" />
          <path d="M392.500 861v55" stroke="#ddd" />
          <path d="M392 861l559 47" stroke="#8c1018" strokeWidth="1.200" />
          <path d="M391 860h4v4h-4z" fill="#a01018" />
          <text x="381" y="867" textAnchor="end">0.</text>
          <text x="381" y="911" textAnchor="end">-6.25</text>
        </svg>
      </div>
    </section>
  );
}

export default function App() {
  return (
    <div className="flex h-screen min-h-[916px] flex-col overflow-hidden bg-[#f7f8fb] font-['Open_Sans','Noto_Sans',sans-serif] text-[11px] text-black">
      <header className="flex h-[22px] flex-none items-center gap-1 border-b border-[#1f3f73] bg-[linear-gradient(90deg,#a9bbd6,#8fa7cc_34%,#3e6aad_46%,#3565ab)] font-['Lato','Open_Sans',sans-serif] text-[12px]">
        <Icon>
          <circle cx="7.500" cy="8" r="7.500" fill="#c8141c" stroke="#7a0a10" />
          <path d="M3.500 12V5l4 4 4-4v7" stroke="#fff" strokeWidth="2" />
        </Icon>
        <h1 className="whitespace-nowrap">A : Static Structural - Mechanical [ANSYS Mechanical Enterprise]</h1>
      </header>
      <nav aria-label="Toolbars" className="flex-none border-b border-[#dfe5ee] pt-px font-['Lato','Open_Sans',sans-serif] text-[12px]">
        <MenuBar />
        <GraphicsBar />
        <DisplayBar />
        <ExplodeBar />
        <EnvironmentBar />
      </nav>
      <main className="flex min-h-0 flex-1">
        <div className="flex w-[334px] flex-none flex-col">
          <Outline />
          <Details />
        </div>
        <div className="ml-[6px] flex min-w-0 flex-1 flex-col">
          <Viewport />
          <ViewTabs />
          <Graph />
        </div>
      </main>
    </div>
  );
}
